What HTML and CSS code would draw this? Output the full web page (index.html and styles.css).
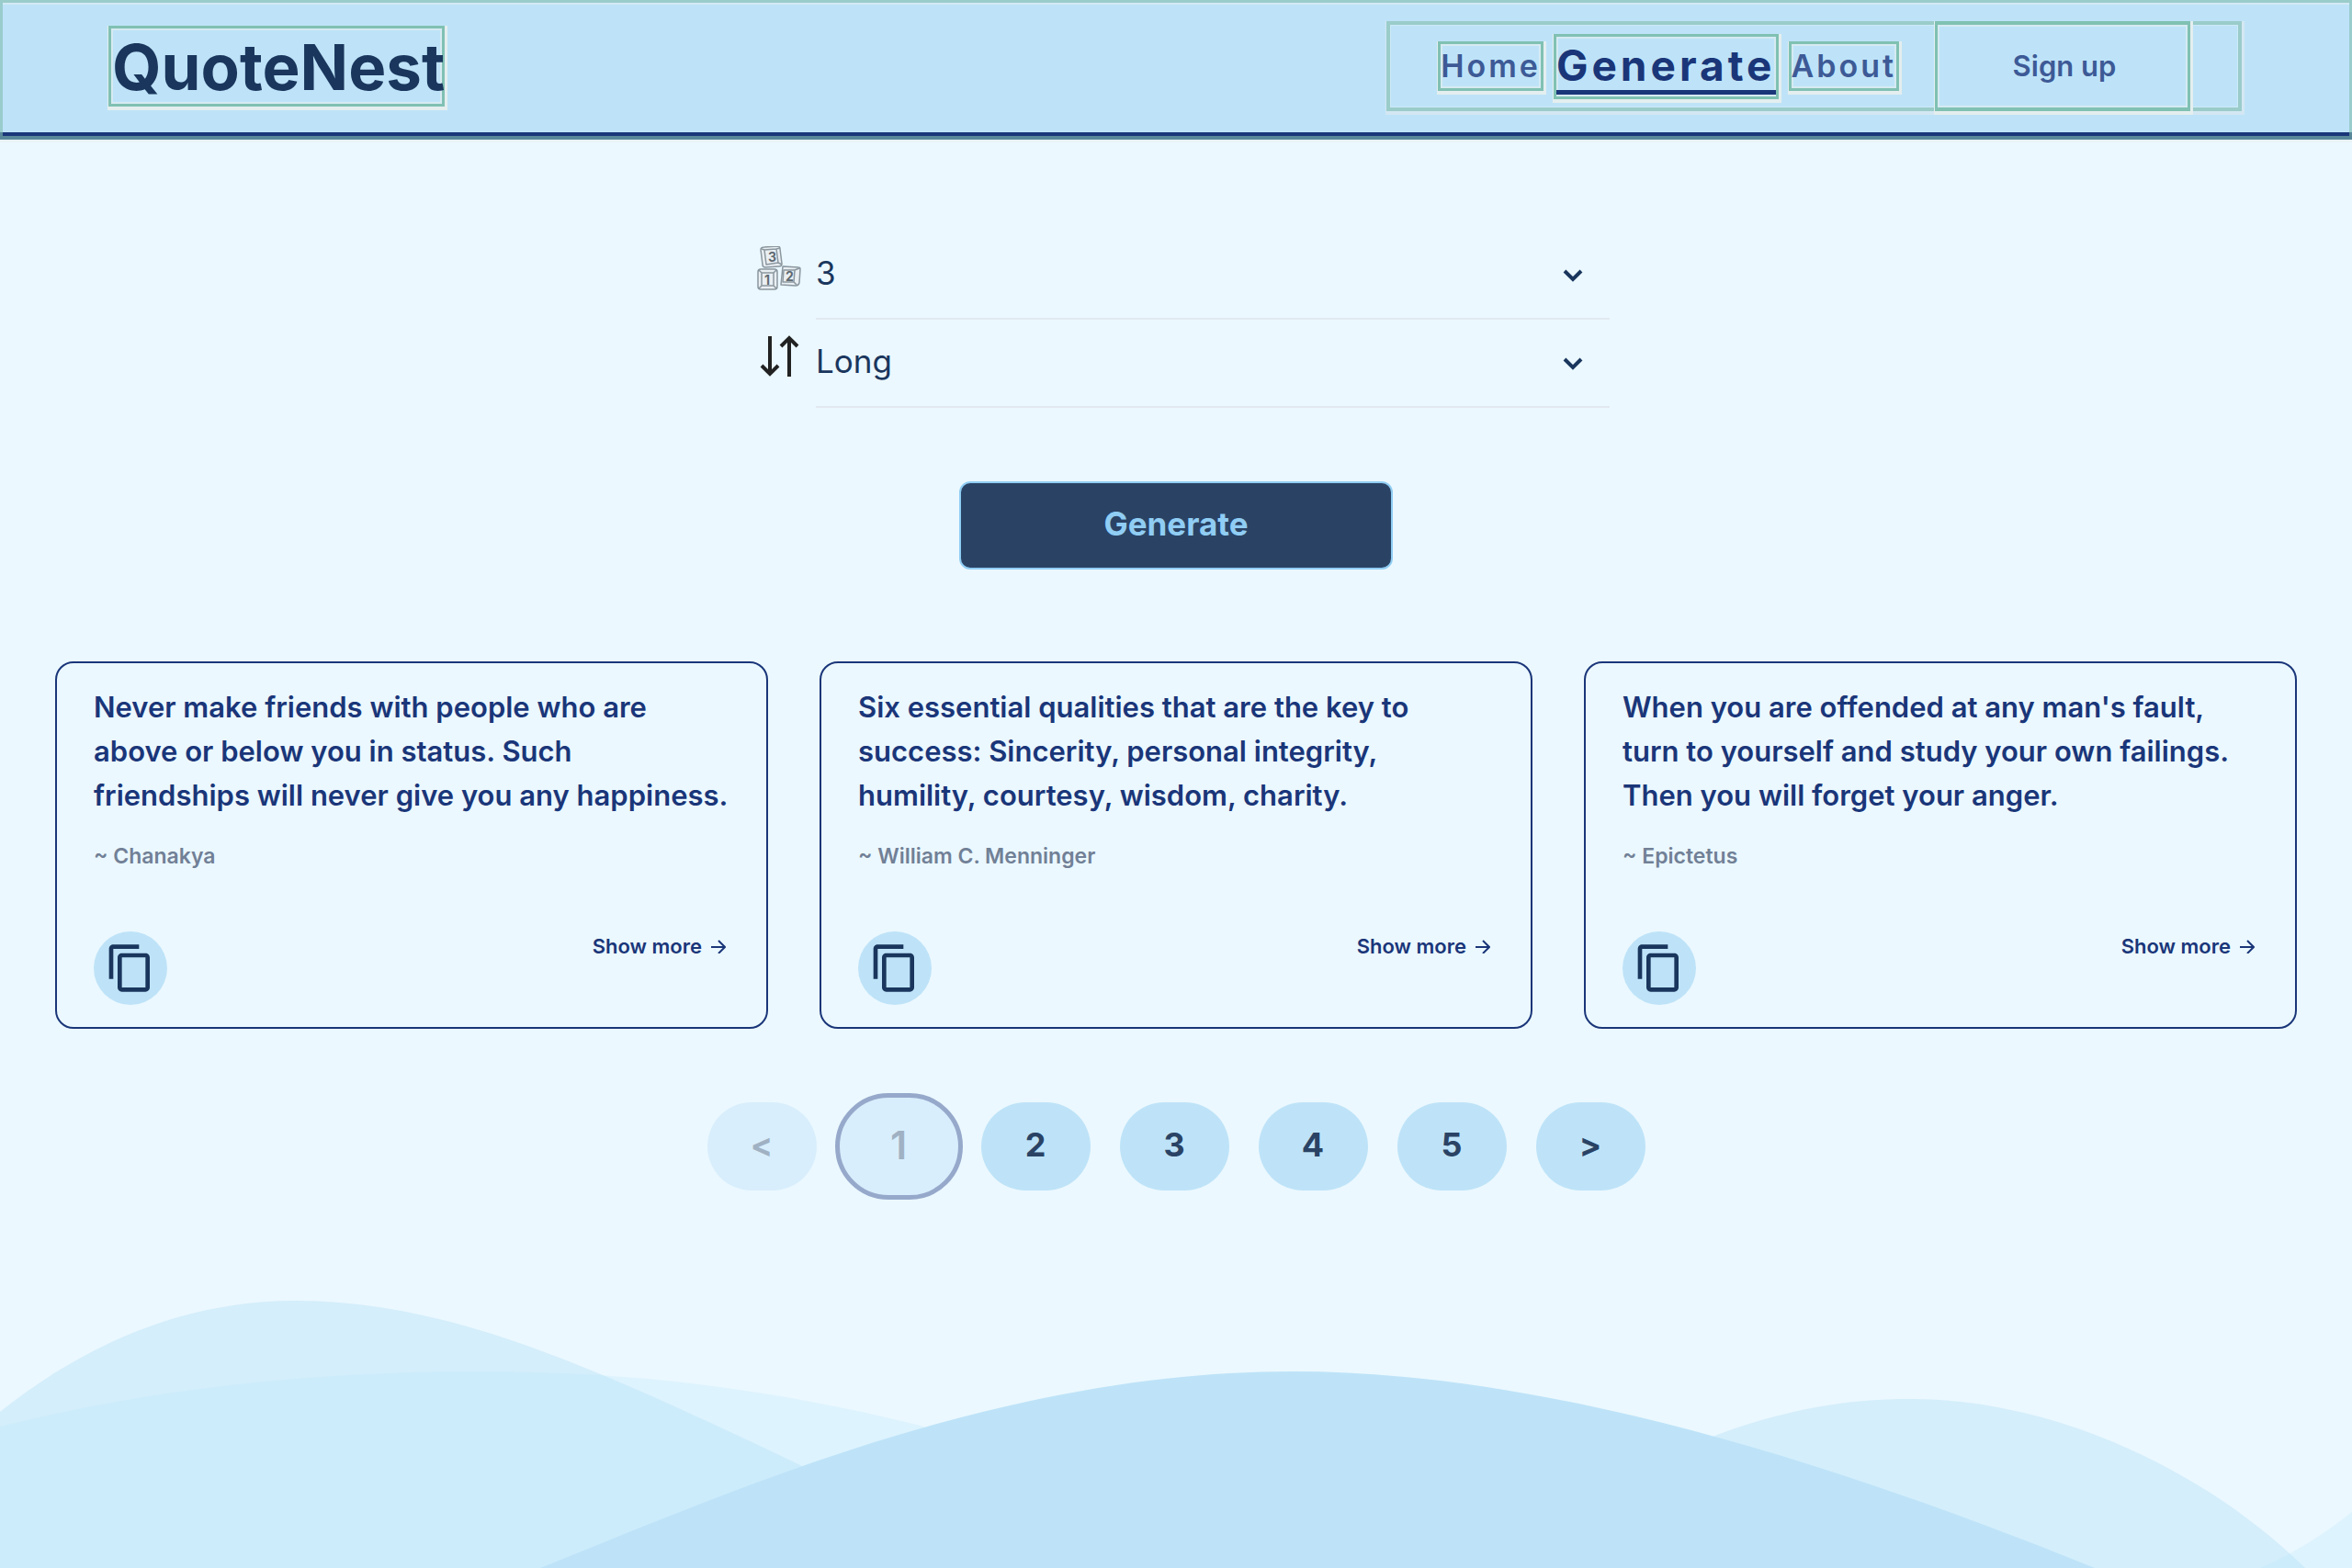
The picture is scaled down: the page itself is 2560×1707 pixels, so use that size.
FILE: index.html
```html
<!DOCTYPE html>
<html lang="en">
<head>
<meta charset="utf-8">
<title>QuoteNest</title>
<link rel="stylesheet" href="styles.css">
</head>
<body>
<header class="header">
  <a class="logo framed" href="#">QuoteNest</a>
  <nav class="nav">
    <a class="nav-link framed" href="#">Home</a>
    <a class="nav-link nav-link-active framed" href="#"><span>Generate</span></a>
    <a class="nav-link framed" href="#">About</a>
    <button class="signup framed" type="button">Sign up</button>
  </nav>
</header>

<main class="main">
  <form class="form">
    <div class="field">
      <label class="field-icon" for="count" aria-label="Number of quotes">
        <svg width="48" height="48" viewBox="0 0 48 48" fill="#e9eff3" stroke="#8b979f" stroke-width="1.5" stroke-linejoin="round">
          <path d="M8 1 22 0Q25 0 25 3L27 19Q27 22 24 22L9 23Q6 23 6 20L4 4Q4 1 8 1Z"/>
          <path d="M8 4 21 3 23 18 10 20ZM21 3 25 2M23 18 27 20M8 4 5 3"/>
          <path d="M28 22 45 23Q47 23 47 25L46 40Q45 43 42 43L26 42Z"/>
          <path d="M29 26 41 26 40 39 28 39ZM41 26 46 24M40 39 43 42"/>
          <path d="M4 25H19Q22 25 22 28V44Q22 47 19 47H4Q1 47 1 44V28Q1 25 4 25Z"/>
          <path d="M5 29H18V43H5ZM5 29 2 26M18 29 21 26M5 43 2 46M18 43 21 46"/>
          <g class="cube-text" stroke="none">
            <text x="12" y="17">3</text>
            <text x="31" y="38">2</text>
            <text x="8" y="42">1</text>
          </g>
        </svg>
      </label>
      <div class="select-wrap">
        <select class="select" id="count"><option>3</option><option>6</option></select>
        <svg class="chevron" width="24" height="24" viewBox="0 0 24 24" fill="none" stroke="#1a365d" stroke-width="4"><path d="M3 7 12 16 21 7"/></svg>
      </div>
    </div>
    <div class="field">
      <label class="field-icon" for="length" aria-label="Quote length">
        <svg width="48" height="48" viewBox="0 0 48 48" fill="none" stroke="#222" stroke-width="4"><path d="M14 2V43M5 34 14 43 23 34M35 46V4M26 13 35 4 44 13"/></svg>
      </label>
      <div class="select-wrap">
        <select class="select" id="length"><option>Long</option><option>Short</option></select>
        <svg class="chevron" width="24" height="24" viewBox="0 0 24 24" fill="none" stroke="#1a365d" stroke-width="4"><path d="M3 7 12 16 21 7"/></svg>
      </div>
    </div>
    <button class="generate" type="button">Generate</button>
  </form>

  <section class="cards">
    <article class="card">
      <p class="quote">Never make friends with people who are<br>above or below you in status. Such<br>friendships will never give you any happiness.</p>
      <p class="author">~ Chanakya</p>
      <div class="card-foot">
        <button class="copy" type="button" aria-label="Copy"><svg width="56" height="56" viewBox="0 0 24 24" fill="#1a365d"><path d="M16 1H4c-1.100 0-2 .9-2 2v14h2V3h12V1zm3 4H8c-1.100 0-2 .9-2 2v14c0 1.100.9 2 2 2h11c1.100 0 2-.9 2-2V7c0-1.100-.9-2-2-2zm0 16H8V7h11v14z"/></svg></button>
        <a class="more" href="#">Show more <svg width="16" height="16" viewBox="0 0 16 16" fill="none" stroke="currentColor" stroke-width="2"><path d="M0 9H14M8 2 15 9 8 16"/></svg></a>
      </div>
    </article>
    <article class="card">
      <p class="quote">Six essential qualities that are the key to<br>success: Sincerity, personal integrity,<br>humility, courtesy, wisdom, charity.</p>
      <p class="author">~ William C. Menninger</p>
      <div class="card-foot">
        <button class="copy" type="button" aria-label="Copy"><svg width="56" height="56" viewBox="0 0 24 24" fill="#1a365d"><path d="M16 1H4c-1.100 0-2 .9-2 2v14h2V3h12V1zm3 4H8c-1.100 0-2 .9-2 2v14c0 1.100.9 2 2 2h11c1.100 0 2-.9 2-2V7c0-1.100-.9-2-2-2zm0 16H8V7h11v14z"/></svg></button>
        <a class="more" href="#">Show more <svg width="16" height="16" viewBox="0 0 16 16" fill="none" stroke="currentColor" stroke-width="2"><path d="M0 9H14M8 2 15 9 8 16"/></svg></a>
      </div>
    </article>
    <article class="card">
      <p class="quote">When you are offended at any man's fault,<br>turn to yourself and study your own failings.<br>Then you will forget your anger.</p>
      <p class="author">~ Epictetus</p>
      <div class="card-foot">
        <button class="copy" type="button" aria-label="Copy"><svg width="56" height="56" viewBox="0 0 24 24" fill="#1a365d"><path d="M16 1H4c-1.100 0-2 .9-2 2v14h2V3h12V1zm3 4H8c-1.100 0-2 .9-2 2v14c0 1.100.9 2 2 2h11c1.100 0 2-.9 2-2V7c0-1.100-.9-2-2-2zm0 16H8V7h11v14z"/></svg></button>
        <a class="more" href="#">Show more <svg width="16" height="16" viewBox="0 0 16 16" fill="none" stroke="currentColor" stroke-width="2"><path d="M0 9H14M8 2 15 9 8 16"/></svg></a>
      </div>
    </article>
  </section>

  <div class="pages">
    <button class="page page-off" type="button" disabled>&lt;</button>
    <button class="page page-off page-current" type="button" disabled>1</button>
    <button class="page" type="button">2</button>
    <button class="page" type="button">3</button>
    <button class="page" type="button">4</button>
    <button class="page" type="button">5</button>
    <button class="page" type="button">&gt;</button>
  </div>
</main>

<svg class="waves" viewBox="0 1380 2560 327" aria-hidden="true">
  <g fill="#bee3f8" fill-opacity="0.5">
    <path d="M0 1537C107 1452 215 1416 322 1416C490 1416 650 1490 871 1595L1120 1707H0Z"/>
    <path d="M1700 1640 1869 1562C1945 1534 2010 1523 2080 1523C2235 1523 2400 1600 2509 1707H1700Z"/>
  </g>
  <g fill="#bde7fc" fill-opacity="0.3">
    <path d="M0 1553C170 1510 350 1493 520 1493C690 1493 840 1512 1002 1552L1400 1707H0Z"/>
    <path d="M2460 1707C2500 1690 2535 1666 2560 1646V1707Z"/>
  </g>
  <path fill="#bee3f8" d="M588 1707C800 1622 1090 1493 1407 1493C1680 1493 1990 1590 2280 1707Z"/>
</svg>
</body>
</html>
```
FILE: styles.css
```css
* {
  box-sizing: border-box;
}

body {
  margin: 0;
  min-height: 100vh;
  display: flex;
  flex-direction: column;
  background: #ebf8ff;
  color: #1a365d;
  font-family: Inter, sans-serif;
}

button,
select {
  font: inherit;
  color: inherit;
}

a {
  color: inherit;
  text-decoration: none;
}

p {
  margin: 0;
}

.framed {
  border: 3px solid #80c1b3;
  box-shadow: 1px 2px 0 2px #e4eeef, inset 0 0 0 2px #d6eaf2;
}

.header {
  position: relative;
  display: flex;
  align-items: center;
  justify-content: space-between;
  height: 152px;
  padding: 0 120px 0 118px;
  background: #bee3f8;
  border-bottom: 8px solid #1a3679;
}

.header::after {
  content: "";
  position: absolute;
  inset: 0 0 -8px;
  pointer-events: none;
  border: 3px solid rgba(130, 190, 175, 0.6);
  border-top-color: #9accca;
  border-bottom-width: 4px;
  box-shadow: 0 3px 0 #e9f3f6, inset 0 2px 0 #d3eaf5;
}

.logo {
  display: flex;
  align-items: center;
  height: 88px;
  padding: 2px 0 0 1px;
  width: 366px;
  white-space: nowrap;
  font-size: 69px;
  font-weight: 700;
}

.nav {
  display: flex;
  align-items: center;
  gap: 11px;
  height: 98px;
  padding-left: 52px;
  padding-right: 52px;
  border: 4px solid #9accca;
  box-shadow: 1px 2px 0 2px #d3e7f3, inset 0 0 0 1px #cde9f6;
}

.nav-link {
  line-height: 48px;
  font-size: 34px;
  font-weight: 600;
  letter-spacing: 3px;
  color: #3d5a96;
}

.nav-link-active {
  padding: 4px 0 2px;
  font-size: 46px;
  font-weight: 700;
  letter-spacing: 4px;
  color: #1a3679;
}

.nav-link-active span {
  display: block;
  line-height: 54px;
  border-bottom: 5px solid #1a3679;
}

.signup {
  width: 278px;
  height: 98px;
  margin-left: 28px;
  padding: 0 0 2px 4px;
  background: none;
  border-width: 4px 3px;
  font-size: 31px;
  font-weight: 600;
  color: #3d5a96;
}

.main {
  display: flex;
  flex-direction: column;
  align-items: center;
  padding: 100px 60px 60px;
}

.form {
  display: flex;
  flex-direction: column;
  align-items: center;
  width: 944px;
  max-width: 100%;
}

.field {
  display: flex;
  width: 100%;
}

.field-icon {
  display: flex;
  align-items: center;
  justify-content: center;
  width: 80px;
  height: 80px;
}

.cube-text {
  font-size: 14px;
  font-weight: 700;
  fill: #5f6a72;
}

.select-wrap {
  position: relative;
  flex: 1;
}

.select {
  appearance: none;
  display: block;
  width: 100%;
  height: 96px;
  padding: 0 0 4px;
  border: 0;
  border-bottom: 2px solid #e2e8f0;
  border-radius: 0;
  background: none;
  font-size: 35px;
}

.chevron {
  position: absolute;
  right: 28px;
  top: 36px;
  pointer-events: none;
}

.generate {
  width: 50%;
  height: 96px;
  margin-top: 80px;
  padding: 0 0 4px;
  border: 2px solid #90cdf4;
  border-radius: 12px;
  background: #2a4365;
  color: #90cdf4;
  font-size: 35px;
  font-weight: 700;
}

.cards {
  display: grid;
  grid-template-columns: repeat(3, 1fr);
  gap: 56px;
  width: 100%;
  margin-top: 100px;
}

.card {
  display: flex;
  flex-direction: column;
  min-height: 400px;
  padding: 24px 40px;
  border: 2px solid #1a3679;
  border-radius: 20px;
  color: #1a3679;
}

.quote {
  font-size: 31px;
  line-height: 48px;
  font-weight: 600;
  white-space: nowrap;
}

.author {
  margin-top: 24px;
  font-size: 23px;
  line-height: 36px;
  font-weight: 600;
  color: #718096;
}

.card-foot {
  display: flex;
  justify-content: space-between;
  margin-top: auto;
}

.copy {
  display: flex;
  align-items: center;
  justify-content: center;
  width: 80px;
  height: 80px;
  padding: 0;
  border: 0;
  border-radius: 50%;
  background: #bee3f8;
}

.more {
  display: flex;
  align-items: center;
  gap: 10px;
  height: 32px;
  padding-right: 4px;
  font-size: 22px;
  font-weight: 600;
}

.pages {
  display: flex;
  align-items: center;
  gap: 32px;
  margin-top: 80px;
}

.page {
  width: 119px;
  height: 96px;
  padding: 0 0 4px;
  border: 0;
  border-radius: 48px;
  background: #bee3f8;
  color: #2a4365;
  font-size: 36px;
  font-weight: 700;
}

.page-off {
  background: #d8eefc;
  color: #a0b1c3;
}

.page-current {
  width: 139px;
  height: 116px;
  margin: -10px -12px;
  border: 5px solid #96a9cb;
  border-radius: 58px;
  font-size: 43px;
  font-weight: 600;
}

.waves {
  display: block;
  width: 100%;
  height: auto;
  margin-top: auto;
}
```
